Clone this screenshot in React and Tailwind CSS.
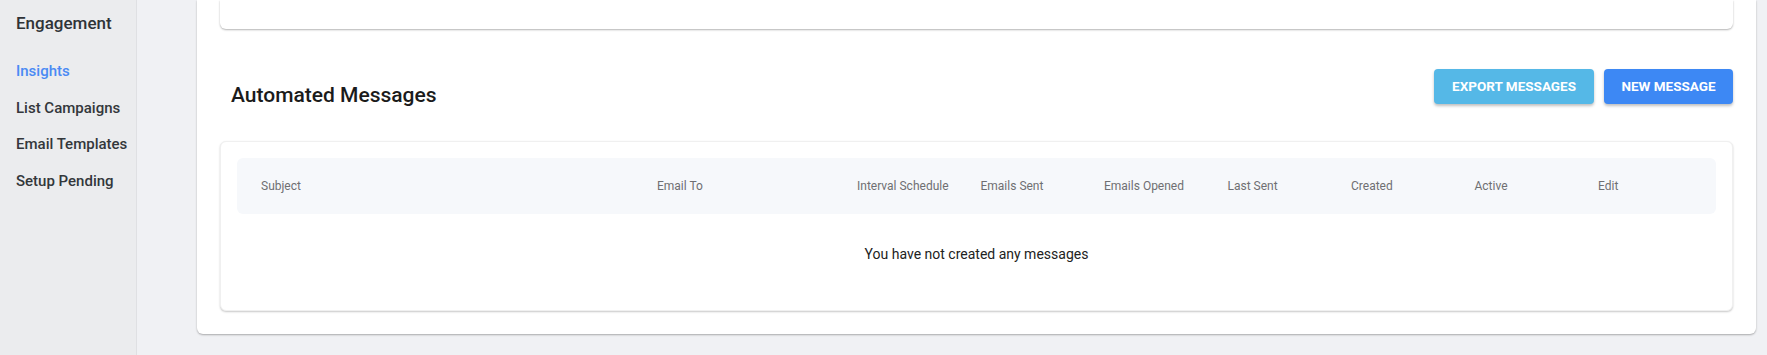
const navItems = ["Insights", "List Campaigns", "Email Templates", "Setup Pending"];

const columns = [
  "Subject",
  "Email To",
  "Interval Schedule",
  "Emails Sent",
  "Emails Opened",
  "Last Sent",
  "Created",
  "Active",
  "Edit",
];

const Sidebar = () => (
  <aside className="w-[137px] shrink-0 border-r border-[#dfe0e3] bg-[#ebecee] pt-[11px] pl-4">
    <div className="text-[17px] leading-6 font-medium text-[#2f3337]">Engagement</div>
    <nav className="mt-[18px] flex flex-col">
      {navItems.map((item, i) => (
        <div
          key={item}
          className={`h-[36.7px] flex items-center text-[15px] font-medium ${
            i === 0 ? "text-[#4a8af4]" : "text-[#33373b]"
          }`}
        >
          {item}
        </div>
      ))}
    </nav>
  </aside>
);

const MessagesTable = () => (
  <div className="mt-8 rounded-md border border-[#f0f0f0] bg-white px-4 pt-4 pb-4 shadow-[0_1px_2px_rgba(0,0,0,0.22)]">
    <div className="grid h-14 grid-cols-[396px_200px_repeat(6,123.5px)_1fr] items-center rounded-md bg-[#f6f8fb] pl-6 text-xs text-[#6f6f72]">
      {columns.map((col) => (
        <div key={col}>{col}</div>
      ))}
    </div>
    <div className="pt-[30px] pb-[30px] text-center text-sm leading-5 text-[#222]">
      You have not created any messages
    </div>
  </div>
);

export default function App() {
  return (
    <div
      className="flex h-[355px] w-full bg-[#f0f1f4]"
      style={{ fontFamily: "Roboto, 'Noto Sans', sans-serif" }}
    >
      <Sidebar />
      <main className="min-w-0 flex-1 pl-[60px] pr-[11px]">
        <div className="rounded-b-md bg-white px-[23px] pb-[23px] shadow-[0_1px_2px_rgba(0,0,0,0.3)]">
          <div className="h-[29px] rounded-b-md bg-white shadow-[0_1px_2px_rgba(0,0,0,0.3)]"></div>
          <div className="mt-10 flex items-start justify-between">
            <h2 className="pt-3 pl-[11px] text-[21px] leading-7 font-medium text-[#1b1b1b]">
              Automated Messages
            </h2>
            <div className="flex gap-[10px]">
              <button className="h-[35px] w-[160px] rounded bg-[#55b8e7] text-[13.5px] font-bold text-white shadow-[0_2px_3px_rgba(0,0,0,0.25)]">
                EXPORT MESSAGES
              </button>
              <button className="h-[35px] w-[129px] rounded bg-[#3d88f4] text-[13.5px] font-bold text-white shadow-[0_2px_3px_rgba(0,0,0,0.25)]">
                NEW MESSAGE
              </button>
            </div>
          </div>
          <MessagesTable />
        </div>
      </main>
    </div>
  );
}
